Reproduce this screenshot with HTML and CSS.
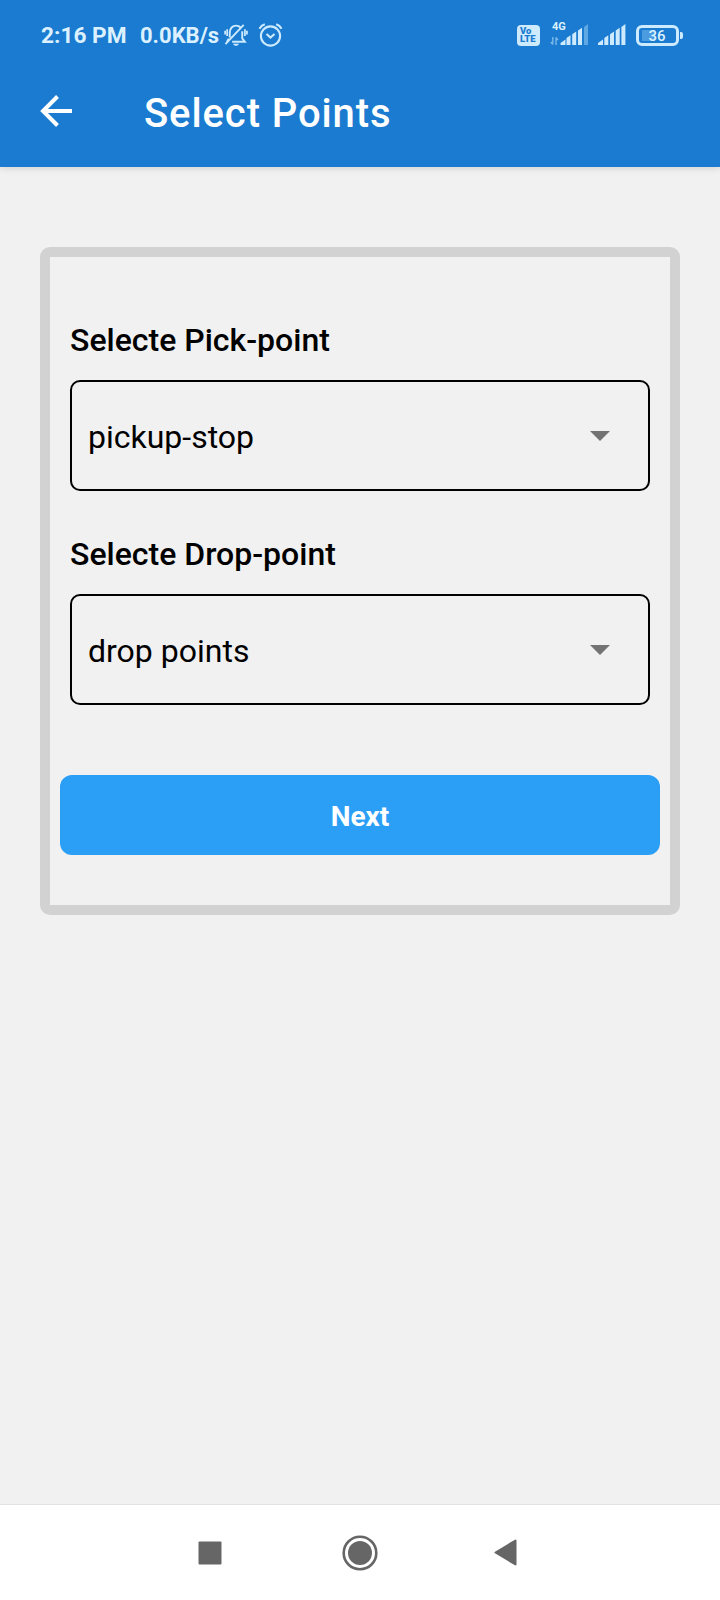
FILE: index.html
```html
<!DOCTYPE html>
<html lang="en">
<head>
<meta charset="utf-8">
<title>Select Points</title>
<link rel="stylesheet" href="styles.css">
</head>
<body>
<div class="screen">
  <header class="header">
    <div class="status">
      <div class="status-left">
        <span class="time">2:16 PM</span>
        <span class="rate">0.0KB/s</span>
        <svg class="bell" width="24" height="24" viewBox="0 0 25 24" fill="none" stroke="#cdeafe" stroke-width="2">
          <path d="M6 14.500V9.500C6 5 9 2.200 12.500 2.200c2 0 3.600.7 4.800 2M19 8v7.500l2.700 3.500H8.500M5 16l-2 3"/>
          <path d="M1.500 21.500 20.500 1.500" stroke-width="2"/>
          <path d="M1.200 7.500v4M3.300 6v7M21.800 6v7M23.900 7.500v4" stroke-width="1.800"/>
          <path d="M9.500 21h6c-.8 2.800-5.200 2.800-6 0z" fill="#cdeafe" stroke="none"/>
        </svg>
        <svg class="alarm" width="25" height="24" viewBox="0 0 25 24" fill="none" stroke="#cdeafe" stroke-width="2.100">
          <circle cx="12.500" cy="13" r="9.600"/>
          <path d="M1.500 5.800C2.500 3.800 4.500 2 6.800 1.300M23.500 5.800c-1-2-3-3.800-5.300-4.500"/>
          <path d="m8.500 11 4 3.500 4-3.500"/>
        </svg>
      </div>
      <div class="status-right">
        <span class="volte"><span>Vo</span><span>LTE</span></span>
        <span class="cell">
          <span class="net">4G</span>
          <svg width="39" height="22" viewBox="0 0 39 22" fill="#cdeafe">
            <path d="M2.800 13v7.500M.8 18l2 2.500M6 21v-7.500M8 16l-2-2.500" fill="none" stroke="#76b5e7" stroke-width="1.500"/>
            <path d="M10.500 21v-2l5-3.500V21zM16.500 21v-7l4-2.800V21zM22.200 21V10.300l4-2.800V21zM28 21V6.500l4-2.800V21z"/>
            <path d="M34 21V3l4-3v21z" fill="#5fa8e3"/>
          </svg>
        </span>
        <svg class="signal" width="28" height="22" viewBox="0 0 28 22" fill="#cdeafe">
          <path d="M0 21v-2l5-3.500V21zM6.300 21v-7l4-2.800V21zM12 21V10.300l4-2.800V21zM17.700 21V6.500l4-2.800V21zM23.400 21V3l4-3v21z"/>
        </svg>
        <span class="battery"><span class="battery-body">36</span><span class="battery-tip"></span></span>
      </div>
    </div>
    <div class="appbar">
      <svg class="back" width="33" height="32" viewBox="0 0 33 32" fill="none" stroke="#fff" stroke-width="4">
        <path d="M32 16H3.500M17.500 1.500 3 16l14.500 14.500"/>
      </svg>
      <h1 class="title">Select Points</h1>
    </div>
  </header>
  <main class="content">
    <section class="card">
      <div class="field">
        <div class="label">Selecte Pick-point</div>
        <div class="select"><span>pickup-stop</span><svg width="20" height="10" viewBox="0 0 20 10"><path d="M0 0h20L10 10z" fill="#737373"/></svg></div>
      </div>
      <div class="field">
        <div class="label">Selecte Drop-point</div>
        <div class="select"><span>drop points</span><svg width="20" height="10" viewBox="0 0 20 10"><path d="M0 0h20L10 10z" fill="#737373"/></svg></div>
      </div>
      <button class="next">Next</button>
    </section>
  </main>
  <nav class="navbar">
    <svg class="recent" width="24" height="24" viewBox="0 0 24 24"><rect x=".5" y=".5" width="23" height="23" rx="1" fill="#666"/></svg>
    <svg class="home" width="36" height="36" viewBox="0 0 36 36"><circle cx="18" cy="18" r="16.300" fill="none" stroke="#666" stroke-width="2.600"/><circle cx="18" cy="18" r="12" fill="#666"/></svg>
    <svg class="prev" width="23" height="27" viewBox="0 0 23 27"><path d="M21.500 1.500v24L1.500 13.500z" fill="#666" stroke="#666" stroke-width="2" stroke-linejoin="round"/></svg>
  </nav>
</div>
</body>
</html>
```
FILE: styles.css
```css
* { box-sizing: border-box; }
body { margin: 0; font-family: Roboto, "Liberation Sans", sans-serif; }
svg { display: block; flex: none; }
.screen { width: 720px; height: 1600px; display: flex; flex-direction: column; background: #f1f1f1; }

.header { height: 167px; background: #1a7bd0; box-shadow: 0 1px 7px rgba(0, 0, 0, .14); }
.status { height: 70px; padding: 0 37px 0 41px; display: flex; justify-content: space-between; color: #dcf1ff; }
.status-left, .status-right { display: flex; align-items: center; white-space: nowrap; }
.time, .rate { padding-top: 1px; font-size: 22.7px; font-weight: 700; line-height: 28px; }
.time { width: 99px; }
.rate { width: 84px; font-size: 22px; }
.alarm { margin-left: 10px; }

.volte { width: 23px; height: 21px; margin-right: 10px; border-radius: 4px; background: #cdeafe; color: #1a7bd0; display: flex; flex-direction: column; justify-content: center; padding-left: 3px; font-size: 9.5px; font-weight: 900; line-height: 8.500px; }
.cell { height: 24px; display: flex; flex-direction: column; justify-content: flex-end; margin-right: 9px; margin-bottom: 2px; }
.net { font-size: 11px; font-weight: 700; line-height: 10px; height: 2px; padding-left: 2px; }
.signal { margin-right: 10px; }
.battery { display: flex; align-items: center; gap: 1px; }
.battery-body { width: 43px; height: 21px; padding-right: 1px; border: 3px solid #cdeafe; border-radius: 6px; text-align: center; font-size: 15px; font-weight: 500; line-height: 16px; background: linear-gradient(#4a9be0, #4a9be0) 3px 2px / 13px 11px no-repeat padding-box; }
.battery-tip { width: 3px; height: 7px; border-radius: 0 2px 2px 0; background: #cdeafe; }

.appbar { height: 97px; padding: 0 40px; display: flex; align-items: flex-start; }
.back { margin-top: 25px; }
.title { margin: 19px 0 0 71px; color: #fff; font-size: 40px; font-weight: 500; line-height: 50px; letter-spacing: .9px; }

.content { flex: 1; padding: 80px 40px 0; }
.card { height: 668px; padding: 63px 10px 0; border: 10px solid #d2d2d2; border-radius: 10px; }
.field { margin: 0 10px 43px; }
.label { margin-bottom: 20px; color: #000; font-size: 32px; font-weight: 500; line-height: 40px; }
.select { height: 111px; padding: 2px 38px 0 16px; border: 2px solid #000; border-radius: 10px; display: flex; align-items: center; justify-content: space-between; color: #000; font-size: 32px; line-height: 40px; }
.select svg { margin-bottom: 1px; }
.next { display: block; width: 100%; height: 80px; margin: 70px 0 0; padding: 3px 0 0; border: 0; border-radius: 12px; background: #2b9ef6; color: #fff; font: 700 28px/34px Roboto, "Liberation Sans", sans-serif; }

.navbar { height: 96px; padding: 0 0 0 198px; display: flex; align-items: center; border-top: 1px solid #e2e2e2; background: #fff; }
.home { margin-left: 120px; }
.prev { margin-left: 116px; }
```
